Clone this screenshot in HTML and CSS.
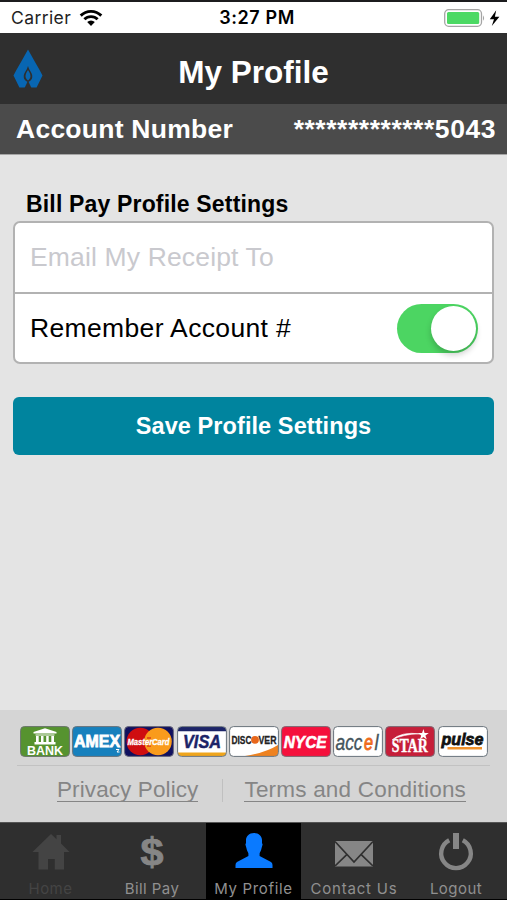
FILE: index.html
```html
<!DOCTYPE html>
<html lang="en">
<head>
  <meta charset="UTF-8">
  <title>My Profile</title>
  <link rel="stylesheet" href="styles.css">
</head>
<body>

  <div class="status-bar">
    <div class="carrier">
      <span>Carrier</span>
      <svg width="24" height="18" viewBox="0 0 24 18">
        <g fill="none" stroke="#000" stroke-width="2.9">
          <path d="M1.7 6.6 A14.6 14.6 0 0 1 22.3 6.6"/>
          <path d="M5.4 10.3 A9.4 9.4 0 0 1 18.6 10.3"/>
        </g>
        <path d="M8.2 13 A5.4 5.4 0 0 1 15.8 13 L12 16.9Z"/>
      </svg>
    </div>
    <span class="clock">3:27 PM</span>
    <div class="battery">
      <svg width="56" height="20" viewBox="0 0 56 20">
        <rect x=".7" y="1.7" width="36.8" height="16.6" rx="4" fill="#fff" stroke="#a5a5a5" stroke-width="1.3"/>
        <rect x="3" y="4" width="32.2" height="12" rx="1.5" fill="#4cd964"/>
        <path d="M39 7.2 Q41.2 10 39 12.8Z" fill="#a5a5a5"/>
        <path d="M52.2 2.3 L45.8 11.2 H50 L47.8 18 L55.4 8.8 H50.9Z"/>
      </svg>
    </div>
  </div>

  <header class="title-bar">
    <svg class="logo" width="30" height="40" viewBox="0 0 30 40">
      <path d="M15 .5 L22 13 Q27 21.5 29.5 26.5 L23.6 38.5 H6.4 L.5 26.5 Q3 21.5 8 13Z" fill="#0866b2"/>
      <path d="M15 17 Q15.6 19.5 17.6 22.5 Q20.2 26.3 18.8 30 Q17.2 32.6 15 33 Q12.8 32.6 11.2 30 Q9.8 26.3 12.4 22.5 Q14.4 19.5 15 17Z" fill="#2f2f2f"/>
      <path d="M15 21 Q18.4 25.8 17.2 28.8 Q16.5 30.6 15 31.5 Q13.5 30.6 12.8 28.8 Q11.6 25.8 15 21Z" fill="#0866b2"/>
      <path d="M15 31.5 L18.4 39 H11.6Z" fill="#2f2f2f"/>
    </svg>
    <h1>My Profile</h1>
  </header>

  <div class="account-bar">
    <span>Account Number</span>
    <span class="account-number">*************5043</span>
  </div>

  <main>
    <h2>Bill Pay Profile Settings</h2>
    <div class="settings">
      <div class="row">
        <input type="text" class="email" placeholder="Email My Receipt To">
      </div>
      <div class="row">
        <span>Remember Account #</span>
        <span class="switch"><span class="knob"></span></span>
      </div>
    </div>
    <button class="save-btn">Save Profile Settings</button>
  </main>

  <footer>
    <div class="cards">
      <svg class="card" viewBox="0 0 50 31">
        <rect x=".6" y=".6" width="48.8" height="29.8" rx="3.8" fill="#56932f" stroke="#69736b"/>
        <path d="M25 2.2 L36.5 6 V7.6 H13.5 V6Z M15.5 8.4 H34.5 V9.6 H15.5Z M16 10 h2.7 v6 h-2.7Z M21 10 h2.5 v6 H21Z M26.2 10 h2.5 v6 h-2.5Z M31.3 10 h2.7 v6 h-2.7Z M14.5 16 H35.5 V18.5 H14.5Z" fill="#fff"/>
        <text x="7" y="29.3" textLength="36" lengthAdjust="spacingAndGlyphs" class="bank">BANK</text>
      </svg>
      <svg class="card" viewBox="0 0 50 31">
        <rect x=".6" y=".6" width="48.8" height="29.8" rx="3.8" fill="#1680bd" stroke="#69737b"/>
        <text x="2" y="20.8" textLength="46" lengthAdjust="spacingAndGlyphs" class="amex">AMEX</text>
        <path d="M44 23.5 h3 l-2 2.5 h2.5" stroke="#fff" fill="none"/>
      </svg>
      <svg class="card" viewBox="0 0 50 31">
        <rect x=".6" y=".6" width="48.8" height="29.8" rx="3.8" fill="#10105e" stroke="#69697b"/>
        <circle cx="16.3" cy="15.5" r="13.8" fill="#cf0d10"/>
        <circle cx="34" cy="15.5" r="13.8" fill="#f99b1c"/>
        <path d="M23 12 h4 M22.5 16 h5 M23 20 h4" stroke="#cf0d10" stroke-width="1"/>
        <text x="3.5" y="19.4" textLength="42" lengthAdjust="spacingAndGlyphs" class="master">MasterCard</text>
      </svg>
      <svg class="card" viewBox="0 0 50 31">
        <rect x=".6" y=".6" width="48.8" height="29.8" rx="3.8" fill="#fff"/>
        <path d="M1 5.2 V4 Q1 1 4 1 H46 Q49 1 49 4 V5.2Z" fill="#1c2468"/>
        <path d="M1 26.5 H49 V27 Q49 30 46 30 H4 Q1 30 1 27Z" fill="#efa51c"/>
        <rect x=".6" y=".6" width="48.8" height="29.8" rx="3.8" fill="none" stroke="#69737b"/>
        <text x="6" y="22" textLength="38" lengthAdjust="spacingAndGlyphs" class="visa">VISA</text>
      </svg>
      <svg class="card" viewBox="0 0 50 31">
        <rect x=".6" y=".6" width="48.8" height="29.8" rx="3.8" fill="#fff"/>
        <path d="M16 30 Q36 27 49 19 V26.5 Q49 30 46 30Z" fill="#ee8220"/>
        <rect x=".6" y=".6" width="48.8" height="29.8" rx="3.8" fill="none" stroke="#69737b"/>
        <text x="2.5" y="17.5" textLength="20" lengthAdjust="spacingAndGlyphs" class="discover">DISC</text>
        <circle cx="26" cy="13.8" r="3.9" fill="#e8671c"/>
        <text x="29.5" y="17.5" textLength="18" lengthAdjust="spacingAndGlyphs" class="discover">VER</text>
      </svg>
      <svg class="card" viewBox="0 0 50 31">
        <rect x=".6" y=".6" width="48.8" height="29.8" rx="3.8" fill="#f5103c" stroke="#7b6973"/>
        <text x="2.7" y="21.8" textLength="43" lengthAdjust="spacingAndGlyphs" class="nyce">NYCE</text>
      </svg>
      <svg class="card" viewBox="0 0 50 31">
        <rect x=".6" y=".6" width="48.8" height="29.8" rx="3.8" fill="#fff" stroke="#69737b"/>
        <text x="2.5" y="24" textLength="27" lengthAdjust="spacingAndGlyphs" class="accel">acc</text>
        <text x="31" y="24" textLength="9" lengthAdjust="spacingAndGlyphs" class="accel accel-e">e</text>
        <text x="41.5" y="24" textLength="4" lengthAdjust="spacingAndGlyphs" class="accel">l</text>
      </svg>
      <svg class="card" viewBox="0 0 50 31">
        <rect x=".6" y=".6" width="48.8" height="29.8" rx="3.8" fill="#c61e39" stroke="#7b6973"/>
        <path d="M7 14 Q16 5.5 35 7.8 Q18 8 7 14Z" fill="#fff" stroke="#fff" stroke-width=".6"/>
        <path d="M38.4 3 L39.6 7 H43.8 L40.4 9.4 L41.8 13.5 L38.4 11 L34.9 13.5 L36.2 9.4 L33 7 H37.1Z" fill="#fff"/>
        <text x="6.8" y="26" textLength="36" lengthAdjust="spacingAndGlyphs" class="star">STAR</text>
      </svg>
      <svg class="card" viewBox="0 0 50 31">
        <rect x=".6" y=".6" width="48.8" height="29.8" rx="3.8" fill="#fff" stroke="#69737b"/>
        <text x="3.5" y="19.3" textLength="42" lengthAdjust="spacingAndGlyphs" class="pulse">pulse</text>
        <path d="M9.5 22.2 H44" stroke="#f0912b" stroke-width="2.4"/>
      </svg>
    </div>
    <div class="links">
      <a class="privacy">Privacy Policy</a>
      <span class="divider"></span>
      <a class="terms">Terms and Conditions</a>
    </div>
  </footer>

  <nav class="tabs">
    <div class="tab home">
      <svg width="40" height="40" viewBox="0 0 40 40" fill="#444">
        <path d="M20 2 L25.5 7.2 V3 H30 V11.5 L38.5 20 H33 V37.5 H23.8 V27 H17 V37.5 H7.5 V20 H1.5Z"/>
      </svg>
      <span>Home</span>
    </div>
    <div class="tab">
      <svg class="dollar-icon" width="40" height="40" viewBox="0 0 40 40">
        <text x="8.5" y="33" textLength="23" lengthAdjust="spacingAndGlyphs" class="dollar">$</text>
      </svg>
      <span class="bill">Bill Pay</span>
    </div>
    <div class="tab active">
      <svg width="40" height="40" viewBox="0 0 40 40" fill="#0a7aff">
        <path d="M20 1 C25 1 28 4.5 28 8 V11 L28.6 12.5 L27.6 16 C27.2 18.5 26 20 25.6 21.5 V24 L37 30 Q38.5 31 38.5 33 V36 H1.5 V33 Q1.5 31 3 30 L14.4 24 V21.5 C14 20 12.8 18.5 12.4 16 L11.4 12.5 L12 11 V8 C12 4.5 15 1 20 1Z"/>
      </svg>
      <span>My Profile</span>
    </div>
    <div class="tab">
      <svg width="40" height="40" viewBox="0 0 40 40">
        <rect x="1" y="9" width="38" height="25.5" fill="#868686"/>
        <path d="M1 9.5 L20 30 L39 9.5 M1 34 L13 22.4 M39 34 L27 22.4" fill="none" stroke="#2f2f2f" stroke-width="1.7"/>
      </svg>
      <span class="contact">Contact Us</span>
    </div>
    <div class="tab">
      <svg width="40" height="40" viewBox="0 0 40 40" fill="none" stroke="#868686">
        <path d="M13.2 8.2 A14.8 14.8 0 1 0 26.8 8.2" stroke-width="4.4"/>
        <path d="M20 1 V17" stroke-width="6"/>
      </svg>
      <span>Logout</span>
    </div>
  </nav>

</body>
</html>
```

FILE: styles.css
```css
* {
  box-sizing: border-box;
}

body {
  margin: 0;
  height: 900px;
  display: flex;
  flex-direction: column;
  font-family: "Liberation Sans", Arial, sans-serif;
  background: #e4e4e4;
  color: #000;
  overflow: hidden;
}

svg {
  display: block;
  flex: none;
}

h1, h2 {
  margin: 0;
}

/* Status bar */
.status-bar {
  height: 33px;
  border-top: 2px solid #1c1c1e;
  background: #fff;
  display: grid;
  grid-template-columns: 1fr auto 1fr;
  align-items: center;
  padding: 0 7px 0 11px;
  font-family: Inter, sans-serif;
  font-size: 17.5px;
}

.carrier {
  display: flex;
  align-items: center;
  gap: 8px;
  color: #222;
  letter-spacing: 0.4px;
}

.clock {
  font-size: 18px;
  font-weight: 600;
  letter-spacing: 0.6px;
  padding-left: 3px;
}

.battery {
  display: flex;
  justify-content: flex-end;
}

/* Header */
.title-bar {
  height: 71px;
  background: #2f2f2f;
  display: grid;
  grid-template-columns: 30px 1fr 30px;
  align-items: center;
  padding: 0 13px;
}

.title-bar h1 {
  color: #fff;
  font-size: 31.5px;
  line-height: 36px;
  text-align: center;
  padding-top: 7px;
}

.account-bar {
  height: 51px;
  background: #4b4b4b;
  border-bottom: 1px solid #a5a5a5;
  display: flex;
  justify-content: space-between;
  align-items: center;
  padding: 0 11px 0 16px;
  color: #fff;
  font-size: 26.5px;
  font-weight: bold;
  letter-spacing: 0.25px;
}

.account-number {
  letter-spacing: 0.55px;
}

/* Form */
main {
  flex: 1;
  padding: 36px 13px 0;
}

main h2 {
  font-size: 23px;
  line-height: 26px;
  letter-spacing: 0.17px;
  padding-left: 13px;
}

.settings {
  margin: 4px 0 33px;
  height: 143px;
  border: 2px solid #b2b2b2;
  border-radius: 7px;
  background: #fff;
}

.row {
  height: 68px;
  display: flex;
  justify-content: space-between;
  align-items: center;
  padding: 0 14px 0 15px;
  font-size: 26.5px;
  letter-spacing: 0.35px;
}

.row:first-child {
  height: 71px;
  border-bottom: 2px solid #b2b2b2;
}

.email {
  width: 100%;
  border: none;
  padding: 0;
  outline: none;
  background: none;
  font: inherit;
  letter-spacing: 0.15px;
}

.email::placeholder {
  color: #c9c9ce;
}

.switch {
  width: 81px;
  height: 49px;
  border-radius: 25px;
  padding: 2px;
  background: #4cd562;
  display: flex;
  justify-content: flex-end;
}

.knob {
  width: 45px;
  height: 45px;
  border-radius: 50%;
  background: #fff;
  box-shadow: 0 4px 6px rgba(0, 0, 0, 0.2);
}

.save-btn {
  display: block;
  width: 100%;
  height: 58px;
  padding: 0;
  border: none;
  border-radius: 6px;
  background: #00849e;
  color: #fff;
  font-family: inherit;
  font-size: 23.5px;
  font-weight: bold;
  letter-spacing: 0.08px;
}

/* Footer */
footer {
  height: 112px;
  background: #d5d5d5;
  padding: 16px 17px 0;
}

.cards {
  height: 40px;
  border-bottom: 1px solid #c2c2c2;
  display: flex;
  gap: 2.2px;
  padding-left: 3px;
}

.card {
  width: 50px;
  height: 31px;
  font-family: "Liberation Sans", Arial, sans-serif;
  font-weight: bold;
}

.bank {
  font-size: 13.5px;
  fill: #fff;
}

.amex {
  font-size: 16.5px;
  fill: #fff;
  stroke: #fff;
  stroke-width: 0.8px;
}

.master {
  font-size: 9.5px;
  font-style: italic;
  fill: #fff;
  stroke: #fff;
  stroke-width: 0.3px;
}

.visa {
  font-size: 18.5px;
  font-style: italic;
  fill: #1c2468;
  stroke: #1c2468;
  stroke-width: 0.5px;
}

.discover {
  font-size: 10.5px;
  fill: #222;
  stroke: #222;
  stroke-width: 0.3px;
}

.nyce {
  font-size: 16.5px;
  font-style: italic;
  fill: #fff;
  stroke: #fff;
  stroke-width: 0.6px;
}

.accel {
  font-size: 22.5px;
  font-weight: normal;
  font-style: italic;
  fill: #44545c;
  stroke: #44545c;
  stroke-width: 0.4px;
}

.accel-e {
  fill: #ef6c1d;
  stroke: #ef6c1d;
  stroke-width: 1px;
}

.star {
  font-family: "Liberation Serif", serif;
  font-size: 18px;
  fill: #fff;
  stroke: #fff;
  stroke-width: 0.4px;
}

.pulse {
  font-size: 17px;
  font-style: italic;
  fill: #111;
  stroke: #111;
  stroke-width: 0.8px;
}

.links {
  display: flex;
  align-items: center;
  height: 48px;
  padding-left: 40px;
  color: #858585;
  font-size: 22.5px;
}

.links a {
  line-height: 23px;
  border-bottom: 1px solid #858585;
}

.privacy {
  letter-spacing: 0.1px;
}

.terms {
  letter-spacing: 0.2px;
}

.divider {
  width: 1px;
  height: 23px;
  margin: 0 21px 0 24px;
  background: #c0c0c0;
}

/* Tab bar */
.tabs {
  height: 78px;
  background: #2f2f2f;
  border-top: 1px solid #555;
  border-bottom: 1px solid #000;
  display: grid;
  grid-template-columns: 101px 105px 95px 106px 100px;
  font-family: Inter, sans-serif;
  font-size: 15px;
  letter-spacing: 0.45px;
  color: #909090;
}

.tab {
  display: flex;
  flex-direction: column;
  align-items: center;
  padding-top: 9px;
  white-space: nowrap;
}

.tab:nth-child(2) {
  padding-right: 3px;
}

.tab:last-child {
  padding-right: 2px;
}

.tab span {
  margin-top: 8px;
  line-height: 18px;
}

.tab.active {
  background: #000;
}

.tab.active span {
  letter-spacing: 0.65px;
}

.tab .contact {
  letter-spacing: 0.8px;
}

.home {
  color: #444;
}

.dollar-icon {
  overflow: visible;
}

.dollar {
  font-family: "Liberation Sans", Arial, sans-serif;
  font-size: 39px;
  font-weight: bold;
  fill: #868686;
  stroke: #868686;
  stroke-width: 0.8px;
  letter-spacing: 0;
}
```
